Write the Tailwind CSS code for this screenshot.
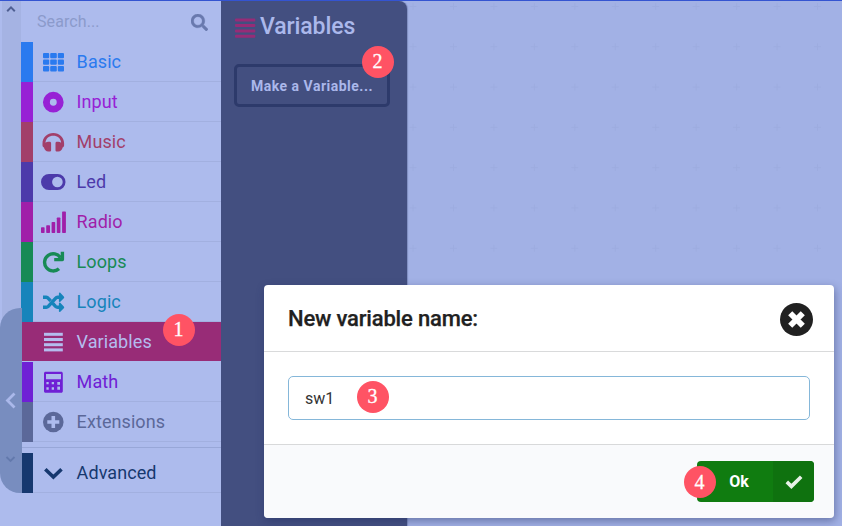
<!DOCTYPE html>
<html lang="en">
<head>
<meta charset="utf-8">
<title>Variables</title>
<script src="https://cdn.jsdelivr.net/npm/@tailwindcss/browser@4"></script>
</head>
<body class="w-[842px] h-[526px] overflow-hidden font-['Roboto',sans-serif]">
<div class="relative flex w-[842px] h-[526px] overflow-hidden bg-[#a2b1e5] border-t border-[#3454d1]">
  <!-- scroll gutter -->
  <div class="w-[21px] shrink-0 flex bg-[#adbbed]">
    <div class="ml-[2px] w-[19px] h-[466px] bg-[#a5b3e3] flex justify-center pt-[4px]">
      <svg class="w-[10px] h-[8px] -ml-[2px]" viewBox="0 0 10 8" fill="none" stroke="#4f5f92" stroke-width="2"><path d="M1.2 6.2 5 2.4l3.8 3.8"/></svg>
    </div>
  </div>
  <!-- toolbox -->
  <div class="w-[200px] shrink-0 bg-[#adbbed] text-[18px] leading-[39px] tracking-[0.08px]">
    <div class="h-[41px] flex items-center justify-between pl-4 pr-[13px] text-base text-[#8b9acb]">
      <span>Search...</span>
      <svg class="w-[17px] h-[17px] mt-[1px]" viewBox="0 0 512 512" fill="#6979ae" stroke="#6979ae" stroke-width="10"><path d="M505 442.700L405.300 343c-4.500-4.500-10.600-7-17-7H372c27.600-35.300 44-79.700 44-128C416 93.100 322.900 0 208 0S0 93.100 0 208s93.100 208 208 208c48.300 0 92.700-16.400 128-44v16.300c0 6.400 2.500 12.500 7 17l99.700 99.700c9.400 9.400 24.600 9.400 33.900 0l28.300-28.300c9.400-9.400 9.400-24.600.1-34zM208 336c-70.700 0-128-57.200-128-128 0-70.700 57.200-128 128-128 70.700 0 128 57.200 128 128 0 70.700-57.200 128-128 128z"/></svg>
    </div>
    <div class="h-10 flex text-[#2a7aef]"><div class="w-3 bg-[#2a7aef]"></div><div class="flex-1 flex border-b border-[#a2b0e0] pl-[7px]">
      <svg class="w-7 h-7 mt-[6px] mr-[8.600px]" viewBox="0 0 28 28" fill="currentColor"><rect x="3" y="5" width="6.200" height="5.300" rx="1"/><rect x="10.200" y="5" width="6.600" height="5.300" rx="1"/><rect x="17.800" y="5" width="6.200" height="5.300" rx="1"/><rect x="3" y="11.500" width="6.200" height="5.300" rx="1"/><rect x="10.200" y="11.500" width="6.600" height="5.300" rx="1"/><rect x="17.800" y="11.500" width="6.200" height="5.300" rx="1"/><rect x="3" y="18" width="6.200" height="5.500" rx="1"/><rect x="10.200" y="18" width="6.600" height="5.500" rx="1"/><rect x="17.800" y="18" width="6.200" height="5.500" rx="1"/></svg><span>Basic</span></div></div>
    <div class="h-10 flex text-[#9721d5]"><div class="w-3 bg-[#9721d5]"></div><div class="flex-1 flex border-b border-[#a2b0e0] pl-[7px]">
      <svg class="w-7 h-7 mt-[6px] mr-[8.600px]" viewBox="0 0 28 28" fill="none" stroke="currentColor"><circle cx="13.300" cy="14.200" r="6.900" stroke-width="6.900"/></svg><span>Input</span></div></div>
    <div class="h-10 flex text-[#a23f6a]"><div class="w-3 bg-[#a23f6a]"></div><div class="flex-1 flex border-b border-[#a2b0e0] pl-[7px]">
      <svg class="w-7 h-7 mt-[6px] mr-[8.600px]" viewBox="0 0 28 28" fill="currentColor"><path d="M13.300 5C7.300 5 2.500 9.800 2.500 15.300v2.300c0 .8.400 1.300 1 1.700l.5.300c.3 2.300 2 4 4.300 4h1.300c.9 0 1.500-.6 1.500-1.400v-7c0-.8-.6-1.400-1.500-1.400H8.300c-1.100 0-2 .3-2.800.9.400-4.300 3.600-6.900 7.800-6.900s7.400 2.600 7.800 6.900c-.8-.6-1.700-.9-2.800-.9H17c-.9 0-1.500.6-1.500 1.400v7c0 .8.600 1.400 1.500 1.400h1.300c2.300 0 4-1.700 4.300-4l.5-.3c.6-.4 1-.9 1-1.700v-2.300C24.100 9.800 19.300 5 13.300 5z"/></svg><span>Music</span></div></div>
    <div class="h-10 flex text-[#4c3aaa]"><div class="w-3 bg-[#4c3aaa]"></div><div class="flex-1 flex border-b border-[#a2b0e0] pl-[7px]">
      <svg class="w-7 h-7 mt-[6px] mr-[8.600px]" viewBox="0 0 28 28" fill="currentColor" fill-rule="evenodd"><path d="M9 6h8.500a8 8 0 0 1 0 16H9A8 8 0 0 1 9 6zM17.400 8.700a5.300 5.300 0 1 0 0 10.600 5.300 5.300 0 0 0 0-10.600z"/></svg><span>Led</span></div></div>
    <div class="h-10 flex text-[#a01fa9]"><div class="w-3 bg-[#a01fa9]"></div><div class="flex-1 flex border-b border-[#a2b0e0] pl-[7px]">
      <svg class="w-7 h-7 mt-[6px] mr-[8.600px]" viewBox="0 0 28 28" fill="currentColor"><rect x="1" y="19.200" width="3.600" height="5.800" rx=".7"/><rect x="6.200" y="17.300" width="3.800" height="7.700" rx=".7"/><rect x="11.600" y="14" width="3.600" height="11" rx=".7"/><rect x="16.800" y="9.500" width="3.600" height="15.500" rx=".7"/><rect x="22.100" y="3.500" width="3.800" height="21.500" rx=".7"/></svg><span>Radio</span></div></div>
    <div class="h-10 flex text-[#178a55]"><div class="w-3 bg-[#178a55]"></div><div class="flex-1 flex border-b border-[#a2b0e0] pl-[7px]">
      <svg class="w-7 h-7 mt-[6px] mr-[8.600px]" viewBox="0 0 28 28" fill="none" stroke="currentColor" stroke-width="3.400"><path d="M20.500 9.800A8.600 8.600 0 1 0 19 20.700"/><path d="M22.400 3.800v7.800h-8.200" stroke-linejoin="round"/></svg><span>Loops</span></div></div>
    <div class="h-10 flex text-[#1784bb]"><div class="w-3 bg-[#1784bb]"></div><div class="flex-1 flex border-b border-[#a2b0e0] pl-[7px]">
      <svg class="w-7 h-7 mt-[6px] mr-[8.600px]" viewBox="0 0 28 28" fill="none" stroke="currentColor" stroke-width="3.400"><path d="M3 9.300h3.300c1 0 1.400.3 2 1l2.300 2.500M13 15.600l2.500 2.800c.6.600 1 .9 2 .9h2.500M3 19.300h3.300c1 0 1.400-.3 2-.9l7.200-8.100c.6-.7 1-1 2-1H20"/><path d="M18.900 5.400c0-.8.900-1.100 1.400-.6l3.500 3.600c.5.500.5 1.300 0 1.800l-3.500 3.600c-.5.500-1.400.2-1.400-.6zM18.900 15.400c0-.8.900-1.100 1.400-.6l3.500 3.600c.5.500.5 1.300 0 1.800l-3.500 3.600c-.5.500-1.400.2-1.400-.6z" fill="currentColor" stroke="none"/></svg><span>Logic</span></div></div>
    <div class="h-[39px] mb-px flex bg-[#982c77] text-[#b4bcee]"><div class="w-3"></div><div class="flex-1 flex pl-[7px]">
      <svg class="w-7 h-7 mt-[6px] mr-[8.600px]" viewBox="0 0 28 28" fill="currentColor"><rect x="4" y="4.800" width="18.800" height="3"/><rect x="4" y="10" width="18.800" height="3"/><rect x="4" y="15.200" width="18.800" height="3"/><rect x="4" y="20.400" width="18.800" height="3"/></svg><span>Variables</span></div></div>
    <div class="h-10 flex text-[#6f20d5]"><div class="w-3 bg-[#6f20d5]"></div><div class="flex-1 flex border-b border-[#a2b0e0] pl-[7px]">
      <svg class="w-7 h-7 mt-[6px] mr-[8.600px]" viewBox="0 0 28 28" fill="currentColor" fill-rule="evenodd"><path d="M5.500 3.800h15.800c.8 0 1.500.7 1.500 1.500v18c0 .8-.7 1.500-1.500 1.500H5.500c-.8 0-1.500-.7-1.500-1.500v-18c0-.8.700-1.500 1.500-1.500zM6 6v5.200h15V6zM6.400 14v2.200h2.300V14zm5.300 0v2.200H14V14zm-5.300 5.200v2.500h2.300v-2.500zm5.300 0v2.500H14v-2.500zM17.300 14v7.700h2.700V14z"/><path d="M17 16.800h3.300v1.800H17z"/></svg><span>Math</span></div></div>
    <div class="h-10 flex text-[#5b6899]"><div class="w-3 bg-[#5b6899]"></div><div class="flex-1 flex border-b border-[#a2b0e0] pl-[7px]">
      <svg class="w-7 h-7 mt-[6px] mr-[8.600px]" viewBox="0 0 28 28"><circle cx="13.300" cy="14" r="10.300" fill="currentColor"/><path d="M13.300 8v12M7.300 14h12" stroke="#adbbed" stroke-width="3.600"/></svg><span>Extensions</span></div></div>
    <div class="h-[6px] border-b border-[#98a7d8]"></div>
    <div class="mt-[5px] h-10 flex text-[#16386f]"><div class="w-3 bg-[#16386f]"></div><div class="flex-1 flex border-b border-[#a2b0e0] pl-[7px]">
      <svg class="w-7 h-7 mt-[6px] mr-[8.600px]" viewBox="0 0 28 28" fill="none" stroke="currentColor" stroke-width="3.600"><path d="m5.300 10.200 8.100 7.900 8.100-7.900"/></svg><span>Advanced</span></div></div>
  </div>
  <!-- flyout -->
  <div class="w-[187px] shrink-0 bg-[#a2b1e5]"><div class="w-[186px] h-full bg-[#434f80] rounded-tr-lg text-[#abb8eb] px-[13px] pt-[10px] shadow-[1px_0_1px_#7f8ec0]">
    <div class="flex items-center h-[31px] text-[23px] font-medium leading-[31px] tracking-[-0.1px]">
      <svg class="w-[22px] h-[22px] mt-[3px] mr-[4px]" viewBox="0 0 22 22" fill="#962c77"><rect x="1" y="1.500" width="20.300" height="3" rx="1"/><rect x="1" y="6.900" width="20.300" height="3" rx="1"/><rect x="1" y="12.400" width="20.300" height="3" rx="1"/><rect x="1" y="17.800" width="20.300" height="3" rx="1"/></svg><span>Variables</span>
    </div>
    <div class="mt-[22px] w-[156px] h-[43px] pt-px border-[3px] border-[#2d3a6b] rounded-[5px] flex items-center justify-center text-[14px] font-bold whitespace-nowrap tracking-[0.5px]">Make a Variable...</div>
  </div></div>
  <!-- workspace -->
  <svg class="flex-1 h-full" fill="none"><defs><pattern id="grid" x="-15.200" y="-14.700" width="40.450" height="40.300" patternUnits="userSpaceOnUse"><path d="M20.200 16.700v7M16.700 20.200h7" stroke="#9aa8dc" stroke-opacity=".6"/></pattern></defs><rect width="100%" height="100%" fill="url(#grid)"/></svg>

  <!-- collapse tab -->
  <div class="absolute left-0 top-[307px] w-[22px] h-[185px] rounded-l-[20px] bg-[#788dbf]">
    <svg class="w-[22px] h-[185px]" viewBox="0 0 22 185" fill="none"><path d="m14.500 85.500-7 7 7 7" stroke="#aab8ea" stroke-width="2.800"/><path d="m6.500 149 4 4 4-4" stroke="#6379ac" stroke-width="1.800"/></svg>
  </div>

  <!-- dialog -->
  <div class="absolute left-[264px] top-[284px] w-[570px] h-[233px] bg-white rounded-[4px] overflow-hidden flex flex-col text-[#212121]">
    <div class="h-[67px] border-b border-[#d9dadb] flex items-center justify-between pl-6 pr-[21px]">
      <h2 class="text-[22px] font-medium tracking-[-0.180px] pt-px [-webkit-text-stroke:0.250px_#212121]">New variable name:</h2>
      <svg class="w-[33px] h-[33px] mt-[2px]" viewBox="0 0 33 33"><circle cx="16.500" cy="16.500" r="16.500" fill="#212121"/><path d="m10.200 10.200 12.600 12.600M22.800 10.200 10.200 22.800" stroke="#fff" stroke-width="5.800"/></svg>
    </div>
    <div class="h-[92px] px-6 pt-6"><div class="h-[44px] pt-px border border-[#85b7d9] rounded-[5px] pl-4 flex items-center text-base text-[#333]">sw1</div></div>
    <div class="flex-1 border-t border-[#d8d9da] bg-[#f9fafc] flex justify-end pt-4 pr-5">
      <div class="w-[117px] h-[41px] rounded-[4px] overflow-hidden bg-[#107c10] flex text-white text-[16px] font-bold">
        <div class="w-[76px] pl-2 flex items-center justify-center">Ok</div>
        <div class="flex-1 bg-[#0f720f] flex items-center justify-center"><svg class="w-[18px] h-[14px]" viewBox="0 0 18 14" fill="none" stroke="#e7f1e7" stroke-width="3.600"><path d="m1.800 6.900 4.600 4.500L16.200 1.800"/></svg></div>
      </div>
    </div>
  </div>
  <div class="absolute left-[264px] top-[284px] w-[570px] h-[233px] rounded-[4px] shadow-[1px_3px_9px_rgba(33,44,96,0.450)] pointer-events-none"></div>

  <!-- step badges -->
  <div class="absolute left-[162.500px] top-[313px] w-8 h-8 rounded-full bg-[#ff5364] text-white text-[20px] leading-[31px] text-center font-['Liberation_Serif',serif] [-webkit-text-stroke:0.300px_white]">1</div>
  <div class="absolute left-[361.500px] top-[45px] w-8 h-8 rounded-full bg-[#ff5364] text-white text-[20px] leading-[31px] text-center font-['Liberation_Serif',serif] [-webkit-text-stroke:0.300px_white]">2</div>
  <div class="absolute left-[356.500px] top-[380px] w-8 h-8 rounded-full bg-[#ff5364] text-white text-[20px] leading-[31px] text-center font-['Liberation_Serif',serif] [-webkit-text-stroke:0.300px_white]">3</div>
  <div class="absolute left-[683.500px] top-[465px] w-8 h-8 rounded-full bg-[#ff5364] text-white text-[20px] leading-8 text-center font-['Liberation_Serif',serif] [-webkit-text-stroke:0.300px_white]">4</div>
</div>
</body>
</html>
